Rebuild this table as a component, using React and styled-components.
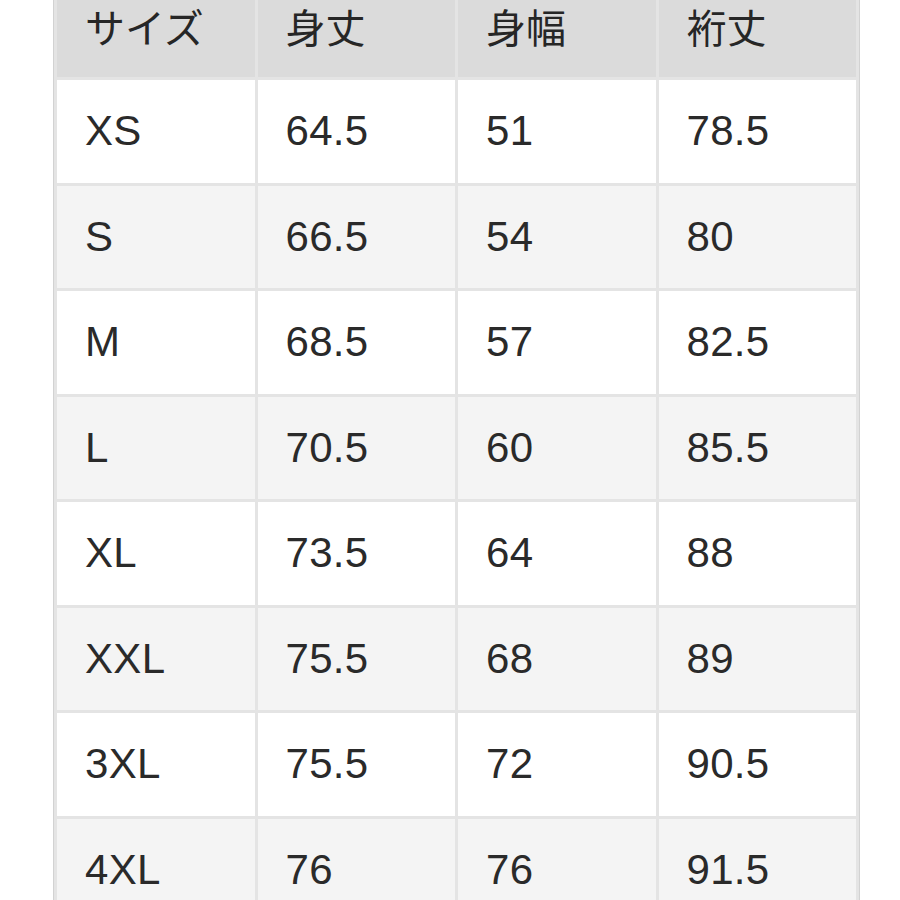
import React from 'react';
import styled, { createGlobalStyle } from 'styled-components';

const GlobalStyle = createGlobalStyle`
  html, body {
    margin: 0;
    padding: 0;
    background: #fff;
    overflow: hidden;
  }
`;

const headers = ['サイズ', '身丈', '身幅', '裄丈'];

const rows = [
  ['XS', '64.5', '51', '78.5'],
  ['S', '66.5', '54', '80'],
  ['M', '68.5', '57', '82.5'],
  ['L', '70.5', '60', '85.5'],
  ['XL', '73.5', '64', '88'],
  ['XXL', '75.5', '68', '89'],
  ['3XL', '75.5', '72', '90.5'],
  ['4XL', '76', '76', '91.5'],
];

const App = () => {
  return (
    <Page>
      <GlobalStyle />
      <SizeTable>
        <thead>
          <tr>
            {headers.map(h => (
              <HeadCell key={h}>{h}</HeadCell>
            ))}
          </tr>
        </thead>
        <tbody>
          {rows.map((row, i) => (
            <Row key={row[0]} $striped={i % 2 === 1}>
              {row.map((v, j) => (
                <Cell key={j}>{v}</Cell>
              ))}
            </Row>
          ))}
        </tbody>
      </SizeTable>
    </Page>
  );
};

export default App;

const Page = styled.div`
  width: 900px;
  height: 900px;
  overflow: hidden;
  background: #fff;
  padding-left: 53px;
  box-sizing: border-box;
`;

const SizeTable = styled.table`
  margin-top: -28px;
  width: 807px;
  table-layout: fixed;
  border-collapse: separate;
  border-spacing: 3px;
  background: #e4e4e4;
  border-left: 1px solid #d2d2d2;
  border-right: 1px solid #d2d2d2;
`;

const HeadCell = styled.th`
  height: 102px;
  padding: 0 0 0 28px;
  background: #dbdbdb;
  text-align: left;
  vertical-align: middle;
  font-family: "Noto Sans CJK JP", "Liberation Sans", sans-serif;
  font-weight: 400;
  font-size: 40px;
  color: #262626;
`;

const Row = styled.tr`
  background: ${p => (p.$striped ? '#f4f4f4' : '#ffffff')};
`;

const Cell = styled.td`
  height: 102.5px;
  padding: 0 0 0 28px;
  vertical-align: middle;
  font-family: "Liberation Sans", Arial, sans-serif;
  font-size: 42px;
  color: #2a2a2a;
  letter-spacing: 0.3px;
`;
